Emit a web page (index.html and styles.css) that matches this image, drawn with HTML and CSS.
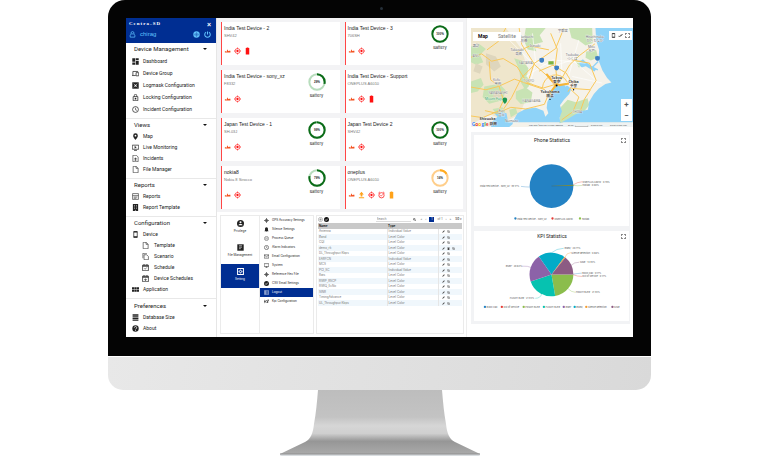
FILE: index.html
```html
<!DOCTYPE html>
<html lang="en">
<head>
<meta charset="utf-8">
<title>Centra-SD</title>
<link rel="stylesheet" href="styles.css">
</head>
<body>
<svg class="sprite" aria-hidden="true">
  <symbol id="user" viewBox="0 0 24 24"><path d="M7 10V7a5 5 0 0 1 10 0v3M4 21v-7l4-4h8l4 4v7z" fill="none" stroke="currentColor" stroke-width="2.5"/></symbol>
  <symbol id="globe" viewBox="0 0 24 24"><circle cx="12" cy="12" r="11" fill="currentColor"/><path d="M3 12h18M12 3v18M5 7c4 3 10 3 14 0M5 17c4-3 10-3 14 0" stroke="#1c56ae" fill="none" stroke-width="1.5"/></symbol>
  <symbol id="power" viewBox="0 0 24 24"><path d="M12 2v10M7 4a9.500 9.500 0 1 0 10 0" fill="none" stroke="currentColor" stroke-width="3.500"/></symbol>
  <symbol id="dash" viewBox="0 0 24 24"><path d="M1 1h10v12H1zM13 1h10v7H13zM1 15h10v8H1zM13 10h10v13H13z" fill="currentColor"/></symbol>
  <symbol id="devices" viewBox="0 0 24 24"><path d="M3 18V5h18M0 19h13M14 9h9v11h-9z" fill="none" stroke="currentColor" stroke-width="2.500"/></symbol>
  <symbol id="mask" viewBox="0 0 24 24"><path d="M1 1h22v22H1z" fill="currentColor"/><path d="M6 6l4 4M18 6l-4 4M6 18l4-4M18 18l-4-4" stroke="#fff" stroke-width="2"/><circle cx="12" cy="12" r="3" fill="#fff"/></symbol>
  <symbol id="lock" viewBox="0 0 24 24"><path d="M4 9h16v14H4zM8 9V5a4 4 0 0 1 8 0v4" fill="none" stroke="currentColor" stroke-width="2.500"/><circle cx="12" cy="16" r="3" fill="currentColor"/></symbol>
  <symbol id="clock" viewBox="0 0 24 24"><circle cx="12" cy="12" r="10" fill="none" stroke="currentColor" stroke-width="2.500"/><path d="M12 6v7l5 2" fill="none" stroke="currentColor" stroke-width="2"/></symbol>
  <symbol id="pin" viewBox="0 0 24 24"><path d="M12 1a8 8 0 0 0-8 8c0 6 8 14 8 14s8-8 8-14a8 8 0 0 0-8-8zm0 5a3 3 0 1 1 0 6 3 3 0 0 1 0-6z" fill="currentColor" fill-rule="evenodd"/></symbol>
  <symbol id="monitor" viewBox="0 0 24 24"><path d="M1 4h22v14H1zM7 22h10" fill="none" stroke="currentColor" stroke-width="2.500"/><path d="M9 7l7 4-7 4z" fill="currentColor"/></symbol>
  <symbol id="screen" viewBox="0 0 24 24"><path d="M1 3h22v14H1zM7 21h10M12 17v4" fill="none" stroke="currentColor" stroke-width="2.500"/></symbol>
  <symbol id="filebug" viewBox="0 0 24 24"><path d="M3 1h12l6 6v16H3z" fill="none" stroke="currentColor" stroke-width="2"/><path d="M8 12h8M8 17h8M12 9v11" stroke="currentColor" stroke-width="2"/></symbol>
  <symbol id="file" viewBox="0 0 24 24"><path d="M4 1h10l7 7v15H4zM14 1v7h7" fill="none" stroke="currentColor" stroke-width="2"/></symbol>
  <symbol id="report" viewBox="0 0 24 24"><path d="M2 2h20v20H2zM2 9h20M6 14h12M6 18h9" fill="none" stroke="currentColor" stroke-width="2"/></symbol>
  <symbol id="building" viewBox="0 0 24 24"><path d="M3 0h18v24H3z" fill="currentColor"/><path d="M7 5h3M14 5h3M7 10h3M14 10h3M7 15h3M14 15h3M10 22h4" stroke="#fff" stroke-width="2"/></symbol>
  <symbol id="phone" viewBox="0 0 24 24"><path d="M6 2h12v20H6z" fill="none" stroke="currentColor" stroke-width="2.500"/><path d="M6 3h12M6 20h12" stroke="currentColor" stroke-width="4"/></symbol>
  <symbol id="copy" viewBox="0 0 24 24"><path d="M7 6h9l6 6v11H7zM3 18V1h14" fill="none" stroke="currentColor" stroke-width="2"/></symbol>
  <symbol id="calendar" viewBox="0 0 24 24"><path d="M2 4h20v19H2zM7 0v5M17 0v5" fill="none" stroke="currentColor" stroke-width="2.500"/><path d="M2 7h20" stroke="currentColor" stroke-width="4"/><path d="M8 15l3 3 5-6" fill="none" stroke="currentColor" stroke-width="2"/></symbol>
  <symbol id="calendar-down" viewBox="0 0 24 24"><path d="M2 4h20v19H2zM7 0v5M17 0v5" fill="none" stroke="currentColor" stroke-width="2.500"/><path d="M2 7h20" stroke="currentColor" stroke-width="4"/><path d="M12 10v7M8 15h8l-4 5z" stroke="currentColor" fill="currentColor"/></symbol>
  <symbol id="apps" viewBox="0 0 24 24"><path d="M0 4h7v7H0zM8 4h7v7H8zM16 4h8v7h-8zM0 13h7v7H0zM8 13h7v7H8zM16 13h8v7h-8z" fill="currentColor"/></symbol>
  <symbol id="database" viewBox="0 0 24 24"><path d="M2 1h20v5H2zM2 8h20v4H2zM2 14h20v4H2zM2 20h20v3H2z" fill="currentColor"/></symbol>
  <symbol id="about" viewBox="0 0 24 24"><circle cx="12" cy="12" r="11" fill="currentColor"/><path d="M8 9a4 4 0 1 1 5 4l-1 2M12 17v3" fill="none" stroke="#fff" stroke-width="2.500"/></symbol>
  <symbol id="signal" viewBox="0 0 24 24"><path d="M3 17v-4h4l2 2 2-9 4 7 2-2h5v6z" fill="#f4511e"/></symbol>
  <symbol id="target" viewBox="0 0 24 24"><circle cx="12" cy="12" r="8.500" fill="none" stroke="#f33" stroke-width="2.500"/><circle cx="12" cy="12" r="4" fill="#f11"/><path d="M12 0v5M12 19v5M0 12h5M19 12h5" stroke="#f33" stroke-width="2.500"/></symbol>
  <symbol id="battery" viewBox="0 0 24 24"><path d="M9 0h6v2h3v22H6V2h3z" fill="currentColor"/></symbol>
  <symbol id="upload" viewBox="0 0 24 24"><path d="M12 1l8 9h-5v7H9v-7H4zM3 20h18v3H3z" fill="#ffa21a"/></symbol>
  <symbol id="alarm" viewBox="0 0 24 24"><circle cx="12" cy="13" r="9" fill="none" stroke="#f33" stroke-width="3"/><path d="M1 6l6-5M23 6l-6-5M8 13l3 3 5-6" fill="none" stroke="#f33" stroke-width="2.500"/></symbol>
  <symbol id="person" viewBox="0 0 24 24"><circle cx="12" cy="12" r="12" fill="currentColor"/><circle cx="12" cy="8" r="3.500" fill="#fff"/><path d="M5 18c1-6 13-6 14 0z" fill="#fff"/></symbol>
  <symbol id="folder" viewBox="0 0 24 24"><path d="M1 1h22v22H1z" fill="currentColor"/><path d="M7 6h10M7 11h10M7 16h6" stroke="#fff" stroke-width="2"/></symbol>
  <symbol id="gear" viewBox="0 0 24 24"><path d="M2 2h20v20H2z" fill="none" stroke="currentColor" stroke-width="3.500"/><circle cx="12" cy="12" r="4" fill="none" stroke="currentColor" stroke-width="3"/><path d="M12 5v3M12 16v3M5 12h3M16 12h3" stroke="currentColor" stroke-width="2"/></symbol>
  <symbol id="gps" viewBox="0 0 24 24"><circle cx="12" cy="12" r="6" fill="none" stroke="currentColor" stroke-width="3"/><path d="M12 0v24M0 12h24" stroke="currentColor" stroke-width="2.500"/></symbol>
  <symbol id="bell" viewBox="0 0 24 24"><path d="M12 1c-5 0-7 4-7 8v7l-3 4h20l-3-4V9c0-4-2-8-7-8zM9 21h6v2H9z" fill="currentColor"/></symbol>
  <symbol id="pause" viewBox="0 0 24 24"><circle cx="12" cy="12" r="10" fill="none" stroke="currentColor" stroke-width="2"/><path d="M9 7v10M15 7v10" stroke="currentColor" stroke-width="2"/></symbol>
  <symbol id="mail" viewBox="0 0 24 24"><path d="M1 4h22v16H1zM1 5l11 8 11-8" fill="none" stroke="currentColor" stroke-width="2.500"/></symbol>
  <symbol id="check" viewBox="0 0 24 24"><circle cx="12" cy="12" r="12" fill="currentColor"/><path d="M6 12l4 5 8-9" fill="none" stroke="#fff" stroke-width="3"/></symbol>
  <symbol id="plus" viewBox="0 0 24 24"><circle cx="12" cy="12" r="10" fill="none" stroke="currentColor" stroke-width="2"/><path d="M12 6v12M6 12h12" stroke="currentColor" stroke-width="2"/></symbol>
  <symbol id="list" viewBox="0 0 24 24"><path d="M1 3h22v18H1zM1 9h22M1 15h22M8 3v18" fill="none" stroke="currentColor" stroke-width="2"/></symbol>
  <symbol id="kpi" viewBox="0 0 24 24"><path d="M1 4v16M1 12h6l4-7M7 12l4 7M13 5l6 14M22 4l-7 15M17 5h6" fill="none" stroke="currentColor" stroke-width="3"/></symbol>
  <symbol id="search" viewBox="0 0 24 24"><circle cx="10" cy="10" r="7" fill="none" stroke="currentColor" stroke-width="4"/><path d="M15 15l8 8" stroke="currentColor" stroke-width="4"/></symbol>
  <symbol id="pencil" viewBox="0 0 24 24"><path d="M2 22l2-7L17 2l5 5L9 20z" fill="currentColor"/></symbol>
  <symbol id="clone" viewBox="0 0 24 24"><path d="M8 8h14v15H8zM3 17V2h14M11 13h8M11 18h8" fill="none" stroke="currentColor" stroke-width="2.500"/></symbol>
  <symbol id="trash" viewBox="0 0 24 24"><path d="M5 7h14v16H5zM3 2h18v3H3z" fill="currentColor"/></symbol>
  <symbol id="expand" viewBox="0 0 24 24"><path d="M2 9V2h7M15 2h7v7M22 15v7h-7M9 22H2v-7" fill="none" stroke="currentColor" stroke-width="3"/></symbol>
  <symbol id="ticks" viewBox="0 0 24 24"><path d="M1 13l5 5L17 6M12 17L23 6" fill="none" stroke="currentColor" stroke-width="3"/></symbol>
</svg>

<div class="monitor">
<div class="bezel">
<div class="screen">

<aside class="sidebar">
  <header class="brand">
    <div class="brand-row"><strong>Centra-SD</strong><button class="close" aria-label="Close menu">×</button></div>
    <div class="brand-row account"><svg class="i7"><use href="#user"/></svg><span class="who">chirag</span><button aria-label="Language"><svg class="i7"><use href="#globe"/></svg></button><button aria-label="Log out"><svg class="i7"><use href="#power"/></svg></button></div>
  </header>
  <nav>
    <section class="group roomy"><h2>Device Management</h2>
      <a href="#"><svg class="i7"><use href="#dash"/></svg>Dashboard</a>
      <a href="#"><svg class="i7"><use href="#devices"/></svg>Device Group</a>
      <a href="#"><svg class="i7"><use href="#mask"/></svg>Logmask Configuration</a>
      <a href="#"><svg class="i7"><use href="#lock"/></svg>Locking Configuration</a>
      <a href="#"><svg class="i7"><use href="#clock"/></svg>Incident Configuration</a>
    </section>
    <section class="group"><h2>Views</h2>
      <a href="#"><svg class="i7"><use href="#pin"/></svg>Map</a>
      <a href="#"><svg class="i7"><use href="#monitor"/></svg>Live Monitoring</a>
      <a href="#"><svg class="i7"><use href="#filebug"/></svg>Incidents</a>
      <a href="#"><svg class="i7"><use href="#file"/></svg>File Manager</a>
    </section>
    <section class="group"><h2>Reports</h2>
      <a href="#"><svg class="i7"><use href="#report"/></svg>Reports</a>
      <a href="#"><svg class="i7"><use href="#building"/></svg>Report Template</a>
    </section>
    <section class="group"><h2>Configuration</h2>
      <a href="#"><svg class="i7"><use href="#phone"/></svg>Device</a>
      <a href="#" class="sub"><svg class="i7"><use href="#file"/></svg>Template</a>
      <a href="#" class="sub"><svg class="i7"><use href="#copy"/></svg>Scenario</a>
      <a href="#" class="sub"><svg class="i7"><use href="#calendar"/></svg>Schedule</a>
      <a href="#" class="sub"><svg class="i7"><use href="#calendar-down"/></svg>Device Schedules</a>
      <a href="#"><svg class="i7"><use href="#apps"/></svg>Application</a>
    </section>
    <section class="group"><h2>Preferences</h2>
      <a href="#"><svg class="i7"><use href="#database"/></svg>Database Size</a>
      <a href="#"><svg class="i7"><use href="#about"/></svg>About</a>
    </section>
  </nav>
</aside>

<main class="center">
  <div class="cards">
    <article class="card"><div><h3>India Test Device - 2</h3><p>SHV42</p><div class="status"><svg><use href="#signal"/></svg><svg><use href="#target"/></svg><svg class="red"><use href="#battery"/></svg></div></div></article>
    <article class="card"><div><h3>India Test Device - 3</h3><p>706SH</p><div class="status"><svg><use href="#signal"/></svg><svg><use href="#target"/></svg></div></div>
      <figure><svg viewBox="0 0 54 54"><circle class="arc" cx="27" cy="27" r="23"/><text x="27" y="30">100%</text></svg><figcaption>Battery</figcaption></figure></article>
    <article class="card"><div><h3>India Test Device - sony_xz</h3><p>F8332</p><div class="status"><svg><use href="#signal"/></svg><svg><use href="#target"/></svg></div></div>
      <figure><svg viewBox="0 0 54 54"><circle class="track" cx="27" cy="27" r="23"/><circle class="arc" cx="27" cy="27" r="23" pathLength="100" stroke-dasharray="29 71"/><text x="27" y="30">29%</text></svg><figcaption>Battery</figcaption></figure></article>
    <article class="card"><div><h3>India Test Device - Support</h3><p>ONEPLUS A6010</p><div class="status"><svg><use href="#signal"/></svg><svg><use href="#target"/></svg><svg class="red"><use href="#battery"/></svg></div></div></article>
    <article class="card"><div><h3>Japan Test Device - 1</h3><p>SH-03J</p><div class="status"><svg><use href="#signal"/></svg><svg><use href="#target"/></svg></div></div>
      <figure><svg viewBox="0 0 54 54"><circle class="track" cx="27" cy="27" r="23"/><circle class="arc" cx="27" cy="27" r="23" pathLength="100" stroke-dasharray="99 1"/><text x="27" y="30">99%</text></svg><figcaption>Battery</figcaption></figure></article>
    <article class="card"><div><h3>Japan Test Device 2</h3><p>SHV42</p><div class="status"><svg><use href="#signal"/></svg><svg><use href="#target"/></svg></div></div>
      <figure><svg viewBox="0 0 54 54"><circle class="arc" cx="27" cy="27" r="23"/><text x="27" y="30">100%</text></svg><figcaption>Battery</figcaption></figure></article>
    <article class="card"><div><h3>nokia8</h3><p>Nokia 8 Sirocco</p><div class="status"><svg><use href="#signal"/></svg><svg><use href="#target"/></svg></div></div>
      <figure><svg viewBox="0 0 54 54"><circle class="track" cx="27" cy="27" r="23"/><circle class="arc" cx="27" cy="27" r="23" pathLength="100" stroke-dasharray="79 21"/><text x="27" y="30">79%</text></svg><figcaption>Battery</figcaption></figure></article>
    <article class="card"><div><h3>oneplus</h3><p>ONEPLUS A6010</p><div class="status"><svg><use href="#signal"/></svg><svg><use href="#upload"/></svg><svg><use href="#target"/></svg><svg><use href="#alarm"/></svg><svg class="amber"><use href="#battery"/></svg></div></div>
      <figure class="low"><svg viewBox="0 0 54 54"><circle class="track" cx="27" cy="27" r="23"/><circle class="arc" cx="27" cy="27" r="23" pathLength="100" stroke-dasharray="16 84"/><text x="27" y="30">16%</text></svg><figcaption>Battery</figcaption></figure></article>
  </div>

  <div class="settings">
    <nav class="tabs">
      <a href="#"><svg class="i7"><use href="#person"/></svg>Privilege</a>
      <a href="#"><svg class="i7"><use href="#folder"/></svg>File Management</a>
      <a href="#" class="on"><svg class="i7"><use href="#gear"/></svg>Setting</a>
    </nav>
    <nav class="options">
      <a href="#"><svg><use href="#gps"/></svg>GPS Accuracy Settings</a>
      <a href="#"><svg><use href="#bell"/></svg>Silence Settings</a>
      <a href="#"><svg><use href="#pause"/></svg>Process Queue</a>
      <a href="#"><svg><use href="#clock"/></svg>Alarm Indicators</a>
      <a href="#"><svg><use href="#mail"/></svg>Email Configuration</a>
      <a href="#"><svg><use href="#screen"/></svg>System</a>
      <a href="#"><svg><use href="#gps"/></svg>Reference Hex File</a>
      <a href="#"><svg><use href="#check"/></svg>CSV Email Settings</a>
      <a href="#" class="on"><svg><use href="#list"/></svg>Logout</a>
      <a href="#"><svg><use href="#kpi"/></svg>Kpi Configuration</a>
    </nav>
    <section class="grid-panel">
      <div class="toolbar">
        <button aria-label="Add"><svg><use href="#plus"/></svg></button><button class="dark" aria-label="Apply"><svg><use href="#check"/></svg></button>
        <input type="search" placeholder="Search" aria-label="Search"><button class="dark find" aria-label="Find"><svg><use href="#search"/></svg></button>
        <div class="pager"><button>«</button><button>‹</button><button class="page">1</button><span>of 1</span><button>›</button><button>»</button></div><button class="size">50 ▾</button>
      </div>
      <table>
        <thead><tr><th>Name</th><th>Type</th><th aria-label="Actions"></th></tr></thead>
        <tbody>
          <tr><td>Antenna</td><td>Individual Value</td><td><svg><use href="#pencil"/></svg><svg><use href="#clone"/></svg></td></tr>
          <tr><td>Band</td><td>Level Color</td><td><svg><use href="#pencil"/></svg><svg><use href="#clone"/></svg></td></tr>
          <tr><td>CQI</td><td>Level Color</td><td><svg><use href="#pencil"/></svg><svg><use href="#clone"/></svg></td></tr>
          <tr><td>demo_rk</td><td>Level Color</td><td><svg><use href="#pencil"/></svg><svg><use href="#trash"/></svg><svg><use href="#clone"/></svg></td></tr>
          <tr><td>DL_Throughput Kbps</td><td>Level Color</td><td><svg><use href="#pencil"/></svg><svg><use href="#clone"/></svg></td></tr>
          <tr><td>EARFCN</td><td>Individual Value</td><td><svg><use href="#pencil"/></svg><svg><use href="#clone"/></svg></td></tr>
          <tr><td>MCS</td><td>Level Color</td><td><svg><use href="#pencil"/></svg><svg><use href="#clone"/></svg></td></tr>
          <tr><td>PCI_SC</td><td>Individual Value</td><td><svg><use href="#pencil"/></svg><svg><use href="#clone"/></svg></td></tr>
          <tr><td>Rats</td><td>Level Color</td><td><svg><use href="#pencil"/></svg><svg><use href="#clone"/></svg></td></tr>
          <tr><td>RSRP_RSCP</td><td>Level Color</td><td><svg><use href="#pencil"/></svg><svg><use href="#clone"/></svg></td></tr>
          <tr><td>RSRQ_EcNo</td><td>Level Color</td><td><svg><use href="#pencil"/></svg><svg><use href="#clone"/></svg></td></tr>
          <tr><td>SINR</td><td>Level Color</td><td><svg><use href="#pencil"/></svg><svg><use href="#clone"/></svg></td></tr>
          <tr><td>TimingAdvance</td><td>Level Color</td><td><svg><use href="#pencil"/></svg><svg><use href="#clone"/></svg></td></tr>
          <tr><td>UL_Throughput Kbps</td><td>Level Color</td><td><svg><use href="#pencil"/></svg><svg><use href="#clone"/></svg></td></tr>
        </tbody>
      </table>
    </section>
  </div>
</main>

<aside class="right">
  <div class="map">
    <svg class="terrain" viewBox="15 24 488 299" preserveAspectRatio="xMidYMid slice">
      <path fill="#f5f2ea" d="M15 24h488v299H15z"/>
      <path fill="#efe6cc" d="M15 24h105l45 60 20 60-8 50 5 40-20 50-40 20-50-20-57 30z"/>
      <g fill="#c8e3b4">
        <path d="M15 80l25-8 20 15-18 18 10 22-22 8-15-8zM15 185l30-10 8 20-18 20-20 5zM180 24l60 0-18 22 10 20-28 8 8 20-26-5-12-28zM310 24l70 0 2 45-22 8-20-15-22-8zM145 115l25 8 18 22-5 25 15 22-20 18-12-20-6-40z"/>
        <path d="M55 200l45-8 20 20-10 30-40 10-20-20zM150 215l30-12 20 15-5 30-30 5-15-16zM80 268l30-5 8 18-22 8zM286 262l20-22 25 8 35-12 5 20-14 18-28 12-26 18-22 8zM130 270l20-5 5 16-20 12z"/>
        <path d="M362 95l30-5 6 22-22 10-16-8zM330 125l18-4 10 14-18 8z"/>
      </g>
      <g fill="#ded6bd"><path d="M60 100l30 10 15 30-20 15-25-22zM30 130l20 10-8 22-20-8zM90 210l20 8-10 20-20-6z"/></g>
      <path fill="#8fd3f8" d="M390 24l2 38 9 28-2 31 12 31 14 23 13 13-18 5-20 13-15 17-14 23-4 24-22 5-20 12-24 14-17 9-2-16 7-19-6-18 12-17 16-17 6-15-11-10-20-3-18 7-12 11-2 15-9 19-2 18 5 16-9 10-6-18-23-9-30 3-25 14-10 18-5 15-12 10H75l4-18 16-15-10-10 12-6 25 6 5 27 503 0V24z"/>
      <path fill="#8fd3f8" d="M340 128l12-10 8 8 32 22-5 7-26-16-14 4z"/>
      <path d="M355 130l42 20M398 125l-20 20" stroke="#8fd3f8" stroke-width="4"/>
      <g fill="none" stroke="#fff" stroke-width="2"><path d="M130 60l60 60 70 20 60-20 70 60M200 40l10 90-20 70M285 70l5 120M340 60l-40 140M180 170l80-50 100 10M320 170l90 20"/></g>
      <g fill="none" stroke="#f9c85a" stroke-width="3">
        <path d="M15 112l32-10 30 22 35-8 42 25 30 48 48 16 40-12M70 125l4 55 25 18 14 44-15 32-48 20-35-5M160 24l8 50 40 62 34 30 28 34M295 24l-25 62-65 45-20 62M255 40l20 48-6 46 6 56M388 72l-45 34-30 28-32 54M15 202l45 8 38-10 48-22 50 18 42 14M318 120l54 10 20 52-18 28-56-4M272 200l-22 20-14 34-56 14-45-5-42 18-36-8M316 210l24 22-18 44-34 25M375 210l-18 28-12 34M205 136l-38 38-30 60-28 40M220 154l42-18 40 24 20 34-15 22M150 98l42-20 58 12M230 205a40 42 0 0 1 75-18M120 24l-22 40-35 26"/>
      </g>
      <path fill="none" stroke="#f5b538" stroke-width="6" d="M242 162l22 26 18 8 28-5M272 194l-16 22-8 14"/>
      <g fill="#3d7fc4"><path d="M221 116q7-4 14 0v8q-7 10-14 0zM266 139q7-4 14 0v8q-7 10-14 0zM389 110q7-4 14 0v8q-7 10-14 0z"/></g><path fill="#7cb342" d="M248 124h16v10h-16z"/>
      <g class="lab" text-anchor="middle">
        <text x="180" y="53">Maebashi</text><text x="175" y="65">前橋</text><text x="154" y="93">Takasaki</text><text x="158" y="105">高崎</text><text x="208" y="81">Isesaki</text><text x="292" y="36">宇都宮</text><text x="388" y="53">Hitachinaka</text><text x="388" y="65">ひたちなか</text><text x="378" y="83">Mito</text><text x="378" y="95">水戸</text><text x="320" y="108">Tsukuba</text><text x="320" y="121">つくば</text><text x="92" y="184">Kofu</text><text x="96" y="196">甲府</text><text x="107" y="276">Fuji</text><text x="107" y="288">富士</text><text x="137" y="308">Numazu</text><text x="30" y="80">諏訪</text>
      </g>
      <g class="lab region" text-anchor="middle"><text x="180" y="133">SAITAMA</text><text x="189" y="187">TOKYO</text><text x="96" y="224">YAMANASHI</text><text x="197" y="246">KANAGAWA</text><text x="335" y="280">CHIBA</text><text x="30" y="111">ANO</text></g>
      <g class="lab city" text-anchor="middle"><text x="273" y="177">Tokyo</text><text x="273" y="190">東京</text><text x="324" y="190">Chiba</text><text x="324" y="203">千葉</text><text x="253" y="219">Yokohama</text><text x="253" y="232">横浜</text><text x="65" y="302">Shizuoka</text><text x="82" y="316">静岡</text></g>
      <circle cx="273" cy="197" r="3"/><circle cx="324" cy="210" r="2"/><circle cx="253" cy="239" r="2"/>
      <text class="lab fuji" x="57" y="242">Mount Fuji</text><path fill="#1a9850" d="M110 240a7 7 0 0 1 14 0q0 6-7 13-7-7-7-13z"/>
      <text class="logo" x="17" y="319"><tspan fill="#4285f4">G</tspan><tspan fill="#ea4335">o</tspan><tspan fill="#fbbc05">o</tspan><tspan fill="#4285f4">g</tspan><tspan fill="#34a853">l</tspan><tspan fill="#ea4335">e</tspan></text>
      <path fill="#eef3f5" opacity=".8" d="M188 311h315v12H188z"/>
      <g class="legal"><text x="190" y="320">Map data ©2019 SK telecom, ZENRIN</text><text x="307" y="320">20 km</text><path d="M329 318v3h38v-3" fill="none" stroke="#555"/><text x="376" y="320">Terms of Use</text><text x="434" y="320">Report a map error</text></g>
    </svg>
    <div class="map-type"><button class="on">Map</button><button>Satellite</button></div>
    <div class="map-tools"><button aria-label="Devices"><svg><use href="#phone"/></svg></button><button aria-label="Select all"><svg><use href="#ticks"/></svg></button><button aria-label="Full screen"><svg><use href="#expand"/></svg></button></div>
    <div class="map-zoom"><button aria-label="Zoom in">+</button><button aria-label="Zoom out">−</button></div>
  </div>
  <div class="stats">
    <section class="chart"><header><h2>Phone Statistics</h2><button aria-label="Expand"><svg><use href="#expand"/></svg></button></header>
      <svg class="plot" viewBox="25 45 468 243">
        <circle cx="259" cy="169" r="66" fill="#2482c4"/><path d="M259 169l66-4v4z" fill="#8aa043"/><path d="M259 169l66-2" stroke="#475c50"/>
        <g fill="none" stroke-width="1"><path d="M193 172q-12 0-26-2" stroke="#2482c4"/><path d="M325 165q12-8 27-9" stroke="#e53935"/><path d="M325 167q12 2 27 0" stroke="#8bc34a"/></g>
        <g class="ct"><text x="43" y="173">India Test Device - sony_xz : 99.17%</text><text x="353" y="159">ONEPLUS A6010 : 0.70%</text><text x="353" y="169">nokia8 : 0.08%</text></g>
        <g class="ct"><circle cx="150" cy="267" r="3.500" fill="#2482c4"/><text x="155" y="270">India Test Device - sony_xz</text><circle cx="262" cy="267" r="3.500" fill="#e53935"/><text x="268" y="270">ONEPLUS A6010</text><circle cx="345" cy="267" r="3.500" fill="#8bc34a"/><text x="351" y="270">nokia8</text></g>
      </svg>
    </section>
    <section class="chart"><header><h2>KPI Statistics</h2><button aria-label="Expand"><svg><use href="#expand"/></svg></button></header>
      <svg class="plot" viewBox="25 333 468 242">
        <path fill="#8bbd4c" d="M259 434h66a66 66 0 0 1-55 65z"/><path fill="#06c2b0" d="M259 434l11 65a66 66 0 0 1-74-44z"/><path fill="#8c62a8" d="M259 434l-63 21a66 66 0 0 1 25-75z"/><path fill="#03abc7" d="M259 434l-38-54a66 66 0 0 1 77 1z"/><path fill="#f39b2d" d="M259 434l39-53 3 2z"/><path fill="#8c5b83" d="M259 434l42-51a66 66 0 0 1 24 51z"/>
        <g fill="none"><path d="M260 368q13-12 36-13" stroke="#03abc7"/><path d="M300 382q3-13 18-14" stroke="#f39b2d"/><path d="M319 406q8-9 24-9" stroke="#8c5b83"/><path d="M325 433q12-2 26-3" stroke="#2482c4"/><path d="M325 435q12 5 26 5" stroke="#e53935"/><path d="M309 477q9 10 22 11" stroke="#8bbd4c"/><path d="M229 493q-3 13-19 13" stroke="#06c2b0"/><path d="M198 413q-10-5-28-4" stroke="#8c62a8"/></g>
        <g class="ct"><text x="298" y="358">RSRQ : 20.71%</text><text x="319" y="371">Silence detection : 0.86%</text><text x="345" y="400">SINR : 13.93%</text><text x="352" y="433">Block Call : 0.17%</text><text x="352" y="443">Out of Service : 0.17%</text><text x="332" y="491">PDSCH BLER : 21.93%</text><text x="133" y="509">PUSCH BLER : 21.93%</text><text x="121" y="412">RSRP : 20.63%</text></g>
        <g class="ct"><circle cx="58" cy="532" r="3.500" fill="#2482c4"/><text x="63" y="535">Block Call</text><circle cx="109" cy="532" r="3.500" fill="#e53935"/><text x="114" y="535">Out of Service</text><circle cx="175" cy="532" r="3.500" fill="#8bbd4c"/><text x="180" y="535">PDSCH BLER</text><circle cx="236" cy="532" r="3.500" fill="#06c2b0"/><text x="241" y="535">PUSCH BLER</text><circle cx="296" cy="532" r="3.500" fill="#8c62a8"/><text x="301" y="535">RSRP</text><circle cx="329" cy="532" r="3.500" fill="#03abc7"/><text x="334" y="535">RSRQ</text><circle cx="364" cy="532" r="3.500" fill="#f39b2d"/><text x="369" y="535">Silence detection</text><circle cx="443" cy="532" r="3.500" fill="#8c5b83"/><text x="448" y="535">SINR</text></g>
      </svg>
    </section>
  </div>
</aside>

</div>
<i class="camera"></i>
</div>
<div class="chin"></div>
<svg class="stand" viewBox="0 0 202 67" aria-hidden="true">
  <defs><linearGradient id="metal" x1="0" y1="0" x2="0" y2="1"><stop offset="0" stop-color="#bdbdbd"/><stop offset=".42" stop-color="#c3c3c3"/><stop offset=".56" stop-color="#d6d6d6"/><stop offset=".68" stop-color="#cfcfcf"/><stop offset=".8" stop-color="#969696"/><stop offset="1" stop-color="#aaa"/></linearGradient></defs>
  <path fill="url(#metal)" d="M39 0h124c1 12 2 23 4 34 1 9 3 15 9 18l25 12H1l25-12c6-3 8-9 9-18 2-11 3-22 4-34z"/>
  <path fill="#d9dde0" d="M1 64h200v1q0 1-2 1H3q-2 0-2-1z"/><path d="M1 64h200" stroke="#8e8e8e" stroke-width="1"/>
</svg>
</div>
</body>
</html>
```
FILE: styles.css
```css
* { box-sizing: border-box; }
body {
  margin: 0;
  padding-left: 1px;
  background: #fff;
  color: #222;
  font: 5px/7px "Liberation Sans", "Noto Sans CJK JP", sans-serif;
}
h2, h3, p, figure { margin: 0; font-weight: normal; }
a { color: inherit; text-decoration: none; }
button { border: 0; padding: 0; background: none; color: inherit; font: inherit; }
svg { display: block; }
.sprite { width: 0; height: 0; position: absolute; }
.i7 { width: 7px; height: 7px; }

/* Desktop computer frame */
.monitor { max-width: 543px; margin: 0 auto; }
.bezel {
  position: relative;
  padding: 18px 18px 19px;
  background: #040404;
  border-radius: 17px 17px 0 0;
}
.camera { position: absolute; top: 7px; left: 50%; width: 3px; height: 3px; border-radius: 50%; background: #26303a; }
.chin {
  height: 34px;
  border-top: 1px solid #fff;
  border-radius: 0 0 15px 15px;
  background: linear-gradient(100deg, #e8e8e8, #d9d9d9);
}
.stand { width: 202px; max-width: 100%; margin: 0 auto; }
.screen {
  display: grid;
  grid-template-columns: 91fr 249fr 167fr;
  background: #fff;
}

/* Sidebar */
.sidebar { border-right: 1px solid #e6e6e6; }
.brand { padding: 2px 5px 3px 3px; background: #002e92; color: #fff; }
.brand-row { display: flex; align-items: center; height: 8px; }
.brand-row strong { flex: 1; font: bold 5px/8px "Liberation Serif", serif; letter-spacing: 1px; }
.close { font-size: 7px; font-weight: bold; }
.brand .account { height: 12px; gap: 4px; color: #62c4ff; }
.who { flex: 1; font-size: 6px; }
.group { padding-bottom: 3px; border-bottom: 1px solid #e8e8e8; font: 5px/11px Roboto, sans-serif; }
.group:last-child { padding-top: 1px; border: 0; }
.group h2 { display: flex; justify-content: space-between; padding: 0 9px 0 8px; font: 6px/12px Roboto, sans-serif; }
.group h2::after { content: ""; align-self: center; border: 2px solid transparent; border-top-color: #111; border-bottom: 0; }
.group a { display: flex; align-items: center; gap: 4px; padding-left: 6px; }
.group .sub { padding-left: 16px; gap: 5px; }
.group.roomy, .roomy a { line-height: 12px; }

/* Device cards */
.center { min-width: 0; }
.cards {
  display: grid;
  grid-template-columns: 1fr 1fr;
  gap: 5px;
  padding: 4px 3px 3px 4px;
  background: #f3f3f5;
}
.card {
  display: flex;
  justify-content: space-between;
  min-height: 43px;
  padding: 3px 14px 0 2px;
  border-left: 1px solid #ff4646;
  background: #fff;
}
.card p { color: #777; font-size: 4px; }
.card h3 { font-size: 5px; white-space: nowrap; }
.status { display: flex; gap: 3px; margin-top: 8px; }
.status svg { width: 7px; height: 8px; }
.red { color: #f11; }
.amber { color: #ffa21a; }
.card figure { width: 18px; font: 4px/6px Inter, sans-serif; text-align: center; }
.card figure svg { width: 18px; height: 18px; margin-bottom: 2px; }
.arc, .track { fill: none; stroke: #0b6b18; stroke-width: 6; transform: rotate(-90deg); transform-origin: 50% 50%; }
.track { stroke: #b8ddbd; }
.low .arc { stroke: #ffab1f; }
.low .track { stroke: #ffce8a; }
.card text { font: bold 9px "Liberation Sans", sans-serif; text-anchor: middle; fill: #222; }

/* Settings */
.settings {
  display: grid;
  grid-template-columns: 40fr 54fr 150fr;
  min-height: 125px;
  padding: 3px 2px 3px 3px;
  font: 3px/5px Inter, sans-serif;
}
.tabs, .options, .grid-panel { border: 1px solid #ebebeb; }
.options { border-left: 0; }
.grid-panel { margin-left: 2px; padding: 0 1px; }
.tabs a { display: flex; flex-direction: column; align-items: center; gap: 2px; padding: 4px 0 6px; white-space: nowrap; }
.on { color: #fff; background: #002e92; }
.options a { display: flex; align-items: center; gap: 3px; height: 9px; padding-left: 4px; white-space: nowrap; }
.options svg { width: 5px; height: 5px; }
.toolbar { display: flex; align-items: center; height: 7px; color: #666; }
.toolbar svg { width: 5px; height: 5px; margin-right: 1px; }
.toolbar .dark { color: #111; }
.toolbar input { width: 35px; height: 5px; margin-left: auto; padding: 0 1px; border: 0; border-bottom: 1px solid #ddd; font: inherit; }
.toolbar .find { margin: 0 4px 0 2px; }
.toolbar .find svg { width: 3px; height: 3px; }
.pager { display: flex; gap: 3px; }
.page { width: 5px; background: #002e92; color: #fff; }
.size { margin-left: 4px; font-weight: bold; }
table { width: 100%; border-collapse: collapse; table-layout: fixed; color: #777; }
th, td { padding: 0 1px; text-align: left; line-height: 5px; white-space: nowrap; }
th { background: #c9c9c9; color: #222; line-height: 6px; }
th:first-child { width: 48%; }
th:last-child { width: 16%; }
tbody tr:nth-child(even) td { background: #f0f7fc; line-height: 6px; }
td + td { border-left: 1px solid #e6e6e6; }
td svg { display: inline-block; width: 3px; height: 3px; margin-left: 2px; color: #444; vertical-align: middle; }

/* Map and statistics */
.right { padding: 10px 0 0 4px; border-left: 1px solid #eee; }
.map { position: relative; }
.terrain { width: 100%; }
.lab { font: 10px "Noto Sans", "Noto Sans CJK JP", sans-serif; fill: #6a6a6e; stroke: #fff; stroke-width: 1px; paint-order: stroke; }
.region { fill: #858585; }
.city { font-size: 11px; font-weight: bold; fill: #444; }
.fuji { font-size: 10px; fill: #1a9850; }
.logo { font: bold 15px "Open Sans", sans-serif; stroke: #fff; stroke-width: 1px; paint-order: stroke; }
.legal { font: 6px "Liberation Sans", sans-serif; fill: #444; }
.map-type { position: absolute; top: 4px; left: 2px; display: flex; background: #fff; font: 5px/9px Roboto, sans-serif; }
.map-type button { padding: 0 5px; color: #777; }
.map-type .on { background: none; color: #111; font-weight: bold; }
.map-tools { position: absolute; top: 3px; right: 1px; display: flex; gap: 2px; padding: 2px; background: #fff; }
.map-tools svg { width: 5px; height: 5px; }
.map-zoom { position: absolute; right: 1px; bottom: 6px; display: grid; width: 11px; background: #fff; font: bold 8px/11px Roboto, sans-serif; color: #555; }
.stats { display: grid; gap: 5px; margin: 5px 3px 0 0; padding: 3px 1px 3px 3px; background: #f2f3f5; }
.chart { background: #fff; }
.chart header { display: flex; align-items: center; padding: 1px 3px 0 9px; }
.chart h2 { flex: 1; text-align: center; font: 5px/9px Roboto, sans-serif; }
.chart header svg { width: 5px; height: 5px; }
.plot { width: 100%; }
.ct { font: 7px Inter, sans-serif; fill: #555; }
```
